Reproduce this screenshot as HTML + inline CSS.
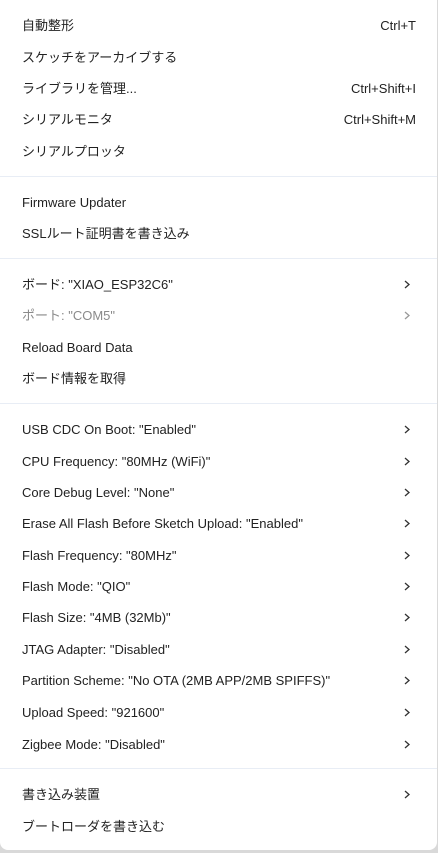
<!DOCTYPE html>
<html><head><meta charset="utf-8"><style>
html,body{margin:0;padding:0;width:438px;height:853px;background:#d9d9d9;overflow:hidden}
.card{position:absolute;left:0;top:0;width:437px;height:850px;background:#fff;border-radius:0 0 8px 8px;}
.i{position:absolute;left:22px;right:22px;height:20px;line-height:20px;font-family:"Liberation Sans","Noto Sans CJK JP",sans-serif;font-size:13px;color:#222;transform:translateY(-9px)}
.g{color:#8a8a8a}
.k{position:absolute;right:-1px;top:0}
.c{position:absolute;right:4px;top:5px;width:8px;height:9px}
.s{position:absolute;left:0;right:0;height:1px;background:#e8edf5}
</style></head><body><div class="card">
<div class="i" style="top:25px">自動整形<span class="k">Ctrl+T</span></div>
<div class="i" style="top:57px">スケッチをアーカイブする</div>
<div class="i" style="top:88px">ライブラリを管理...<span class="k">Ctrl+Shift+I</span></div>
<div class="i" style="top:119px">シリアルモニタ<span class="k">Ctrl+Shift+M</span></div>
<div class="i" style="top:151px">シリアルプロッタ</div>
<div class="s" style="top:176px"></div>
<div class="i" style="top:202px">Firmware Updater</div>
<div class="i" style="top:233px">SSLルート証明書を書き込み</div>
<div class="s" style="top:258px"></div>
<div class="i" style="top:284px">ボード: "XIAO_ESP32C6"<svg class="c" viewBox="0 0 8 9"><path d="M2 1L6 4.5L2 8" fill="none" stroke="#333" stroke-width="1.3"/></svg></div>
<div class="i g" style="top:315px">ポート: "COM5"<svg class="c" viewBox="0 0 8 9"><path d="M2 1L6 4.5L2 8" fill="none" stroke="#999" stroke-width="1.3"/></svg></div>
<div class="i" style="top:347px">Reload Board Data</div>
<div class="i" style="top:378px">ボード情報を取得</div>
<div class="s" style="top:403px"></div>
<div class="i" style="top:429px">USB CDC On Boot: "Enabled"<svg class="c" viewBox="0 0 8 9"><path d="M2 1L6 4.5L2 8" fill="none" stroke="#333" stroke-width="1.3"/></svg></div>
<div class="i" style="top:461px">CPU Frequency: "80MHz (WiFi)"<svg class="c" viewBox="0 0 8 9"><path d="M2 1L6 4.5L2 8" fill="none" stroke="#333" stroke-width="1.3"/></svg></div>
<div class="i" style="top:492px">Core Debug Level: "None"<svg class="c" viewBox="0 0 8 9"><path d="M2 1L6 4.5L2 8" fill="none" stroke="#333" stroke-width="1.3"/></svg></div>
<div class="i" style="top:523px">Erase All Flash Before Sketch Upload: "Enabled"<svg class="c" viewBox="0 0 8 9"><path d="M2 1L6 4.5L2 8" fill="none" stroke="#333" stroke-width="1.3"/></svg></div>
<div class="i" style="top:555px">Flash Frequency: "80MHz"<svg class="c" viewBox="0 0 8 9"><path d="M2 1L6 4.5L2 8" fill="none" stroke="#333" stroke-width="1.3"/></svg></div>
<div class="i" style="top:586px">Flash Mode: "QIO"<svg class="c" viewBox="0 0 8 9"><path d="M2 1L6 4.5L2 8" fill="none" stroke="#333" stroke-width="1.3"/></svg></div>
<div class="i" style="top:617px">Flash Size: "4MB (32Mb)"<svg class="c" viewBox="0 0 8 9"><path d="M2 1L6 4.5L2 8" fill="none" stroke="#333" stroke-width="1.3"/></svg></div>
<div class="i" style="top:649px">JTAG Adapter: "Disabled"<svg class="c" viewBox="0 0 8 9"><path d="M2 1L6 4.5L2 8" fill="none" stroke="#333" stroke-width="1.3"/></svg></div>
<div class="i" style="top:680px">Partition Scheme: "No OTA (2MB APP/2MB SPIFFS)"<svg class="c" viewBox="0 0 8 9"><path d="M2 1L6 4.5L2 8" fill="none" stroke="#333" stroke-width="1.3"/></svg></div>
<div class="i" style="top:712px">Upload Speed: "921600"<svg class="c" viewBox="0 0 8 9"><path d="M2 1L6 4.5L2 8" fill="none" stroke="#333" stroke-width="1.3"/></svg></div>
<div class="i" style="top:744px">Zigbee Mode: "Disabled"<svg class="c" viewBox="0 0 8 9"><path d="M2 1L6 4.5L2 8" fill="none" stroke="#333" stroke-width="1.3"/></svg></div>
<div class="s" style="top:768px"></div>
<div class="i" style="top:794px">書き込み装置<svg class="c" viewBox="0 0 8 9"><path d="M2 1L6 4.5L2 8" fill="none" stroke="#333" stroke-width="1.3"/></svg></div>
<div class="i" style="top:826px">ブートローダを書き込む</div>
</div></body></html>
